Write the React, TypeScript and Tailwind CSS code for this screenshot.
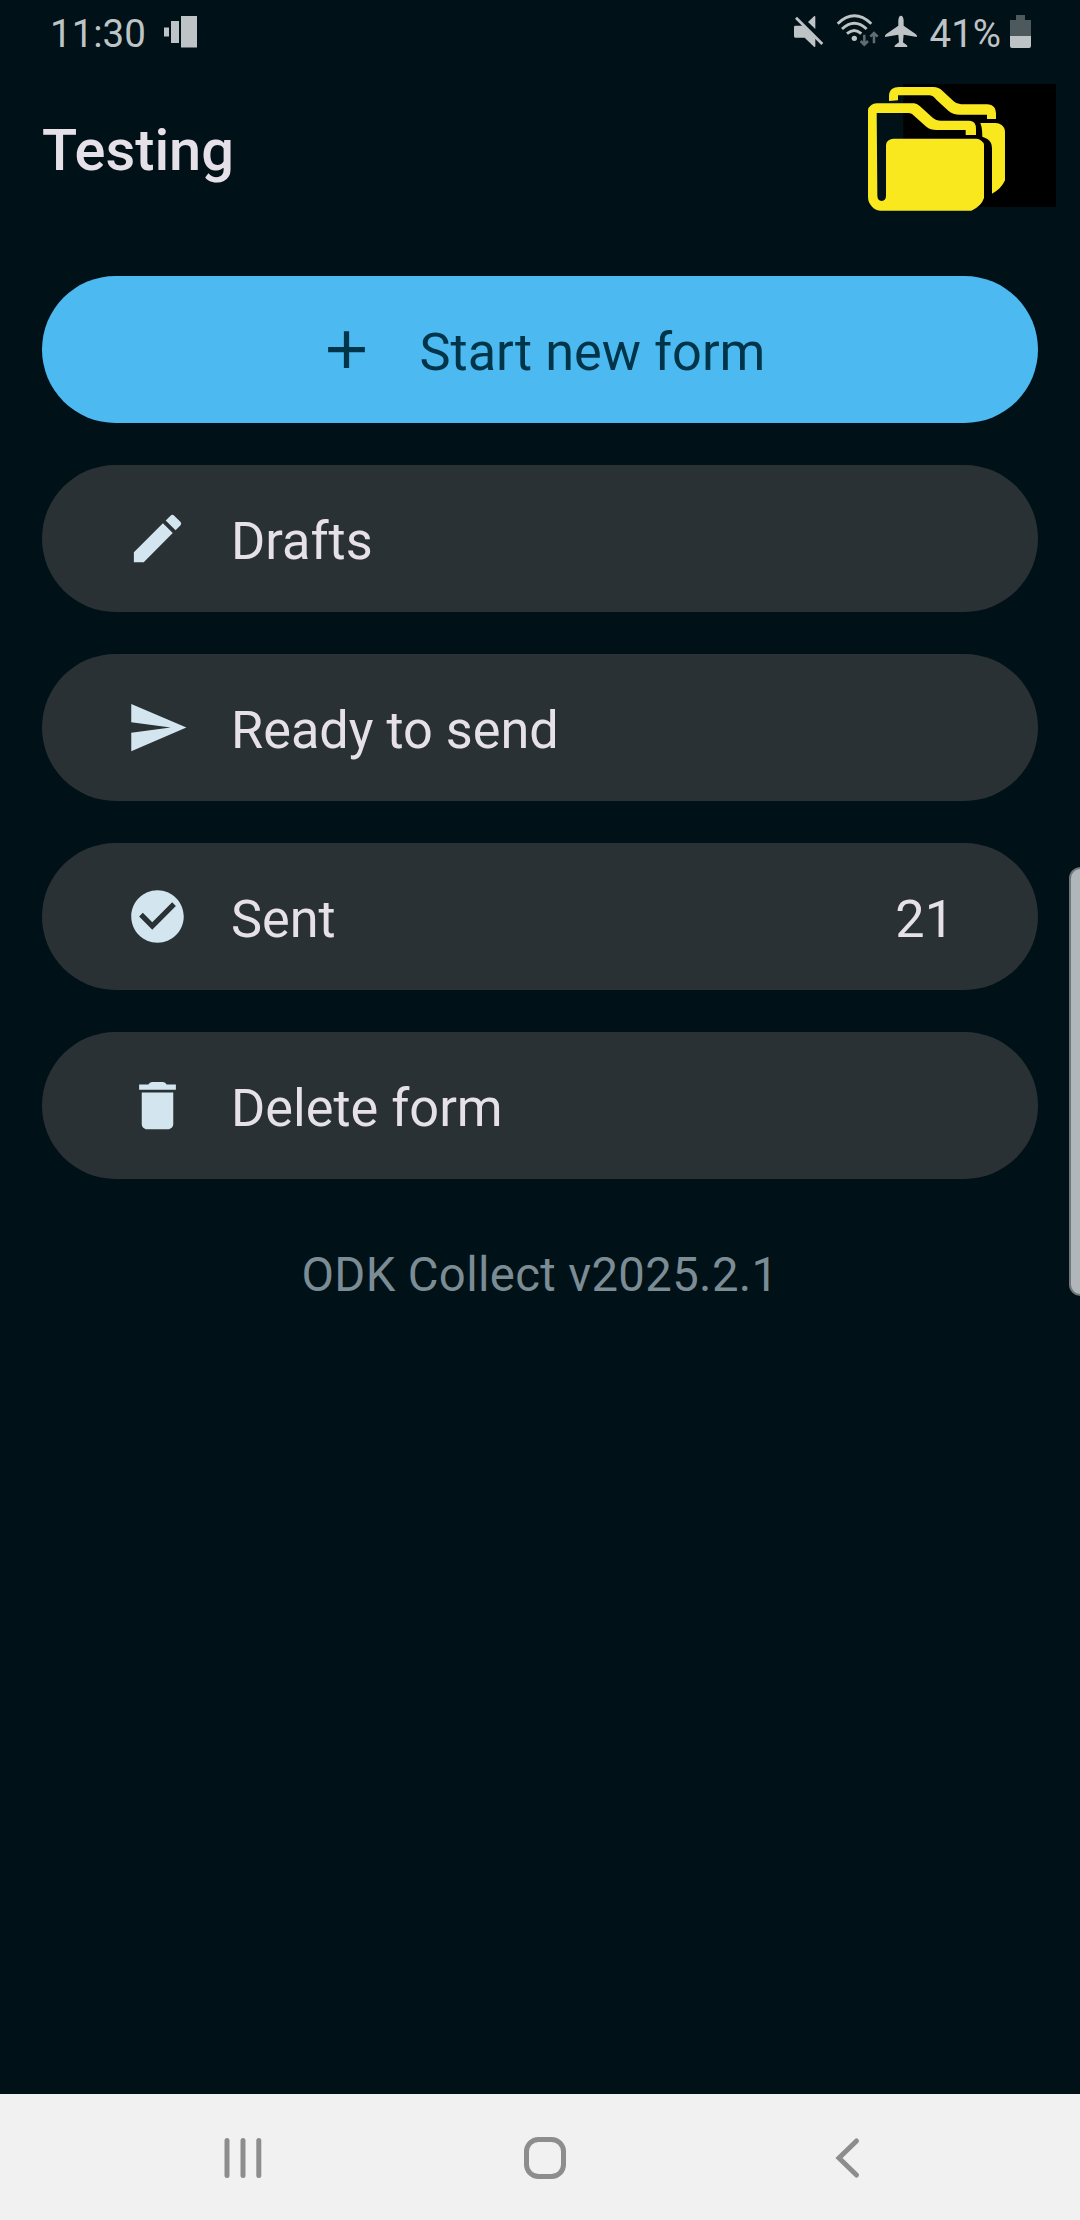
import type { ReactNode } from 'react';

const icons = {
  add: 'M19 13h-6v6h-2v-6H5v-2h6V5h2v6h6v2z',
  edit: 'M3 17.25V21h3.75L17.81 9.94l-3.75-3.75L3 17.25zM20.71 7.04a1 1 0 0 0 0-1.41l-2.34-2.34a1 1 0 0 0-1.41 0l-1.83 1.83 3.75 3.75 1.83-1.83z',
  send: 'M2.01 21L23 12 2.01 3 2 10l15 2-15 2z',
  check: 'M12 2C6.48 2 2 6.48 2 12s4.48 10 10 10 10-4.48 10-10S17.52 2 12 2zm-2 15l-5-5 1.41-1.41L10 14.17l7.59-7.59L19 8l-9 9z',
  trash: 'M6 19c0 1.1.9 2 2 2h8c1.1 0 2-.9 2-2V7H6v12zM19 4h-3.5q-.5-1-1.4-1h-4.2q-.9 0-1.4 1H5v2h14V4z',
};

const menu = [
  { label: 'Drafts', icon: icons.edit },
  { label: 'Ready to send', icon: icons.send },
  { label: 'Sent', icon: icons.check, count: 21 },
  { label: 'Delete form', icon: icons.trash },
];

function Icon({ d }: { d: string }) {
  return (
    <svg viewBox="0 0 24 24" className="size-[63px] shrink-0 fill-current">
      <path d={d} />
    </svg>
  );
}

function StatusBar() {
  return (
    <div className="flex h-[66px] items-start justify-between pl-[50px] pr-[49px] text-[38.5px] leading-[68px] text-[#bec3c5]">
      <div className="flex">
        <span>11:30</span>
        <svg viewBox="0 0 34 32" className="ml-[18px] mt-4 h-8 w-[34px] fill-current">
          <path d="M0 11.5h5v9H0zM7 5h8v22H7zM17 0h16v31.5H17z" />
        </svg>
      </div>
      <div className="flex">
        {/* Icons share one 3x grid with the origin at the top of the bar */}
        <svg viewBox="69 0 370 198" className="mr-[12px] h-[66px] w-[123.3px] fill-current">
          <path d="M73 77h22l38 38v23q0 4-4 2l-28-27H73q-4 0-4-4V81q0-4 4-4zM111 66l18-17q4-3 4 2v36z" />
          <path d="M75 53l79 79" fill="none" stroke="#bec3c5" strokeWidth="8.5" />
          <g fill="none" stroke="#bec3c5" strokeWidth="8.5">
            <path d="M200 71q50-47 101 0M213 87q37-34 74 0M228 101q22-19 43 0" />
          </g>
          <circle cx="250" cy="115" r="8" />
          <path d="M280 104v31m-11-12l11 11 11-11M309 130V98m-11 12l11-11 11 11" fill="none" stroke="#626d71" strokeWidth="7.5" />
          <path d="M390 47q7 0 8 14v16l36 25q5 3 4 9l-40-7-2 23 11 8q3 2 2 6h-38q-1-4 2-6l11-8-2-23-40 7q-1-6 4-9l36-25V61q1-14 8-14z" />
        </svg>
        <span>41%</span>
        <svg viewBox="0 0 21 33" className="ml-[9px] mt-[15px] h-[33px] w-[21px]">
          <path d="M6 0h9v5h6v16H0V5h6z" fill="#4e595d" />
          <path d="M0 21h21v10q0 2-2 2H2q-2 0-2-2z" fill="#bec3c5" />
        </svg>
      </div>
    </div>
  );
}

function FolderLogo() {
  return (
    <svg viewBox="84 42 564 382" className="h-[127.3px] w-[188px]">
      <path d="M190 42h458v369H190z" fill="#000" />
      <g fill="#f9e81e">
        <path d="M147 93V77q0-14 10-21 6-5 20-5h103q16 0 27 11l34 32q9 9 22 9h80q12 0 19 8 6 6 6 18v18h-27v-13h-81q-22 0-35-12l-36-33q-10-13-22-13h-93v15z" />
        <path
          fillRule="evenodd"
          d="M84 120q0-7 9-14 7-6 17-6h112q8 0 18 9l38 34q10 9 25 9h84q12 0 17 8 4 5 4 18v17h-31v-15h-87q-19 0-31-10l-43-38q-5-3-12-3h-94l2 247q0 17 13 17t13-17V225q0-9 8-14 6-5 14-5h249q9 0 15 6 8 6 8 12v160q-8 25-38 38H123q-16 0-27-12-12-12-12-28z"
        />
        <path d="M421 159h46q10 0 18 6 10 8 10 20v146q-11 26-39 40V235q0-20-15-29l-14-6q0-27-6-41z" />
      </g>
    </svg>
  );
}

function Pill({ className, children }: { className: string; children: ReactNode }) {
  return (
    <button className={`flex h-[147px] w-full items-center rounded-full text-[52.25px] leading-[62px] ${className}`}>
      {children}
    </button>
  );
}

export default function App() {
  return (
    <div className="relative flex h-[2220px] w-[1080px] flex-col overflow-hidden bg-[#001117] font-['Roboto',sans-serif]">
      <StatusBar />

      <header className="flex h-[168px] items-start justify-between pl-[42px] pr-6 pt-[18px]">
        <h1 className="pt-8 text-[57.75px] font-medium leading-[68px] text-[#e6e1e9]">Testing</h1>
        <FolderLogo />
      </header>

      <main className="flex flex-1 flex-col gap-[42px] px-[42px] pt-[42px]">
        <Pill className="justify-center gap-[42px] bg-[#4cbaf0] text-[#003549]">
          <Icon d={icons.add} />
          <span className="pt-1.5">Start new form</span>
        </Pill>
        {menu.map((item) => (
          <Pill key={item.label} className="bg-[#2a3134] px-[84px] text-[#e6e1e9]">
            <span className="text-[#d3e6f0]">
              <Icon d={item.icon} />
            </span>
            <span className="pl-[42px] pt-1.5">{item.label}</span>
            {item.count && <span className="ml-auto pt-1.5">{item.count}</span>}
          </Pill>
        ))}
        <p className="pt-[26px] text-center text-[47.25px] leading-[56px] tracking-[0.35px] text-[#7b8c94]">
          ODK Collect v2025.2.1
        </p>
      </main>

      <nav className="flex h-[126px] items-start bg-[#f1f1f1] text-[#8d8d8d]">
        <svg viewBox="0 0 1080 126" className="h-[126px] w-full" fill="none" stroke="currentColor" strokeLinecap="round">
          <path d="M227 46.5v35M243 46.5v35M258.8 46.5v35" strokeWidth="5" />
          <rect x="526.5" y="45.5" width="37" height="37" rx="12" strokeWidth="5" />
          <path d="M856.5 47l-17.5 17 17.5 17" strokeWidth="5" />
        </svg>
      </nav>

      {/* Edge panel handle */}
      <div className="absolute -right-3 top-[867px] h-[429px] w-[23px] rounded-[14px] border-2 border-[#6f7779] bg-[#b0b6b9]" />
    </div>
  );
}
